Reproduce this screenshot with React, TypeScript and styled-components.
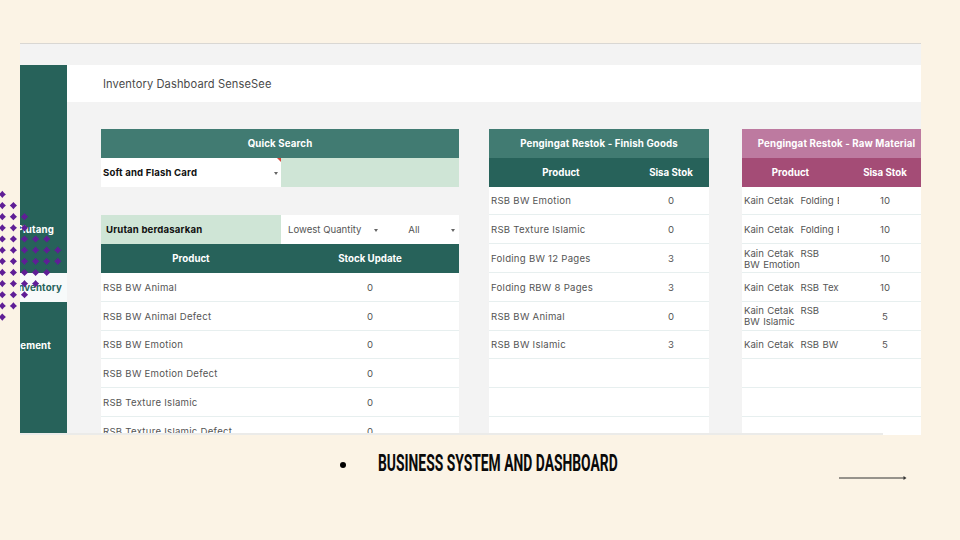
import React from 'react';
import styled, { createGlobalStyle } from 'styled-components';

const Global = createGlobalStyle`
  html, body { margin: 0; padding: 0; background: #fbf3e5; }
  body { width: 960px; height: 540px; overflow: hidden; font-family: "Inter", "Open Sans", sans-serif; }
`;
const Slide = styled.div`
  position: relative; width: 960px; height: 540px; padding: 43px 39px 0 20px; box-sizing: border-box;
  background: #fbf3e5; overflow: hidden;
`;
const Frame = styled.div`
  height: 392px; box-sizing: border-box; padding-top: 21px; background: #f3f3f3;
  border-top: 1px solid #d9d7d3; border-bottom: 2px solid #ebebe9; overflow: hidden; display: flex;
`;
const ScrollEnd = styled.span`
  position: absolute; left: 883px; top: 433px; width: 38px; height: 2px; background: #fff;
`;
const Sidebar = styled.nav`
  width: 47px; flex: none; height: 100%; background: #27625a; overflow: hidden; display: flex; flex-direction: column;
  padding-top: 150px; box-sizing: content-box;
`;
const NavItem = styled.div<{ $active?: boolean; $right: number; $h: number; $mt?: number }>`
  height: ${p => p.$h}px; flex: none; display: flex; align-items: center; justify-content: flex-end; white-space: nowrap;
  margin-top: ${p => p.$mt ?? 0}px;
  padding-right: ${p => p.$right}px; background: ${p => (p.$active ? '#f7fafa' : 'transparent')};
  color: ${p => (p.$active ? '#27625a' : '#ffffff')}; font-size: 9.7px; font-weight: 700; letter-spacing: .15px;
`;
const Main = styled.main`flex: 1; min-width: 0; display: flex; flex-direction: column; overflow: hidden;`;
const Header = styled.header`
  height: 37px; flex: none; background: #fff; display: flex; align-items: center; padding-left: 36px;
  font-size: 11.1px; color: #4a4a4a; letter-spacing: .12px;
`;
const Content = styled.div`display: flex; padding: 27px 0 0 34px; align-items: flex-start; overflow: hidden; flex: 1;`;
const Panel = styled.section<{ $w: number; $mr: number }>`
  width: ${p => p.$w}px; flex: none; margin-right: ${p => p.$mr}px;
`;
const Row = styled.div<{ $cols: string }>`display: grid; grid-template-columns: ${p => p.$cols}; height: 28.8px;`;
const Title = styled.div<{ $bg: string }>`
  height: 28.8px; display: flex; align-items: center; justify-content: center; background: ${p => p.$bg};
  color: #fff; font-size: 9.7px; font-weight: 700; white-space: nowrap; letter-spacing: .14px;
`;
const HeadCell = styled.div<{ $bg: string }>`
  background: ${p => p.$bg}; color: #fff; font-size: 9.7px; font-weight: 700;
  display: flex; align-items: center; justify-content: center;
`;
const Cell = styled.div<{ $center?: boolean; $tight?: boolean }>`
  background: #fff; border-bottom: 1px solid #e7efef; box-sizing: border-box; overflow: hidden; padding-top: 1px;
  display: flex; align-items: center; justify-content: ${p => (p.$center ? 'center' : 'flex-start')};
  padding-left: ${p => (p.$center ? 0 : 2)}px; color: #555; font-size: 9.6px; line-height: 11px;
  letter-spacing: ${p => (p.$center || p.$tight ? 0 : 0.26)}px; word-spacing: ${p => (p.$tight ? 0.7 : 0)}px; white-space: pre;
`;
const InputCell = styled.div<{ $bg: string; $bold?: boolean; $pad: number; $padRight?: number; $center?: boolean }>`
  position: relative; background: ${p => p.$bg}; display: flex; align-items: center; padding-left: ${p => p.$pad}px;
  padding-right: ${p => p.$padRight ?? 0}px;
  justify-content: ${p => (p.$center ? 'center' : 'flex-start')};
  font-size: 9.6px; font-weight: ${p => (p.$bold ? 700 : 400)}; color: ${p => (p.$bold ? '#111' : '#555')};
  letter-spacing: ${p => (p.$bold ? 0.16 : 0)}px;
`;
const Caret = styled.span<{ $r: number }>`
  position: absolute; right: ${p => p.$r}px; top: 14px; width: 0; height: 0;
  border-left: 2.5px solid transparent; border-right: 2.5px solid transparent; border-top: 3px solid #666;
`;
const Note = styled.span`
  position: absolute; right: 0; top: 0; width: 0; height: 0;
  border-left: 4px solid transparent; border-top: 4px solid #d8453a;
`;
const Spacer = styled.div`height: 28.8px;`;
const Caption = styled.div`display: flex; align-items: flex-start; height: 60px;`;
const Bullet = styled.span`width: 6px; height: 6px; border-radius: 50%; background: #000; margin: 27px 0 0 320px; flex: none;`;
const CaptionText = styled.h2`
  margin: 16px 0 0 32px; flex: none; width: 239px; white-space: nowrap; font-family: "Roboto", "Liberation Sans", sans-serif;
  font-size: 23.5px; line-height: 25px; font-weight: 700; color: #0a0a0a; text-transform: uppercase;
  transform: scaleX(.59); transform-origin: left center;
`;
const ArrowWrap = styled.svg`margin: 40px 0 0 222px; flex: none; display: block;`;
const DotsSvg = styled.svg`position: absolute; left: 0; top: 190px; pointer-events: none;`;

const leftRows: [string, string][] = [
  ['RSB BW Animal', '0'], ['RSB BW Animal Defect', '0'], ['RSB BW Emotion', '0'], ['RSB BW Emotion Defect', '0'],
  ['RSB Texture Islamic', '0'], ['RSB Texture Islamic Defect', '0'],
];
const finish: [string, string][] = [
  ['RSB BW Emotion', '0'], ['RSB Texture Islamic', '0'], ['Folding BW 12 Pages', '3'], ['Folding RBW 8 Pages', '3'],
  ['RSB BW Animal', '0'], ['RSB BW Islamic', '3'], ['', ''], ['', ''], ['', ''],
];
const raw: [string, string][] = [
  ['Kain Cetak  Folding BW', '10'], ['Kain Cetak  Folding RBW', '10'], ['Kain Cetak  RSB\nBW Emotion', '10'],
  ['Kain Cetak  RSB Texture', '10'], ['Kain Cetak  RSB\nBW Islamic', '5'], ['Kain Cetak  RSB BW', '5'],
  ['', ''], ['', ''], ['', ''],
];
const dotCounts = [1, 2, 3, 3, 5, 6, 6, 5, 4, 3, 2, 1];
const Dots = () => (
  <DotsSvg width="64" height="132" viewBox="0 0 64 132">
    {dotCounts.map((n, r) =>
      Array.from({ length: n }, (_, c) => {
        const x = 2.3 + c * 11.1;
        const y = 4.4 + r * 11.15;
        const a = 3.6;
        const b = 1.7;
        return <path key={`${r}-${c}`} d={`M${x} ${y - a}L${x + b} ${y - b}L${x + a} ${y}L${x + b} ${y + b}L${x} ${y + a}L${x - b} ${y + b}L${x - a} ${y}L${x - b} ${y - b}Z`} fill="#5f1e96" />;
      })
    )}
  </DotsSvg>
);

export default function App() {
  return (
    <Slide>
      <Global />
      <Frame>
        <Sidebar>
          <NavItem $right={13} $h={29}>Hutang Piutang</NavItem>
          <NavItem $right={5} $h={29} $mt={29} $active>Inventory</NavItem>
          <NavItem $right={16} $h={86}>Management</NavItem>
        </Sidebar>
        <Main>
          <Header>Inventory Dashboard SenseSee</Header>
          <Content>
            <Panel $w={358} $mr={30}>
              <Title $bg="#417b72">Quick Search</Title>
              <Row $cols="180px 178px">
                <InputCell $bg="#fff" $bold $pad={2}>Soft and Flash Card<Caret $r={3} /><Note /></InputCell>
                <InputCell $bg="#cfe5d6" $pad={0} />
              </Row>
              <Spacer />
              <Row $cols="180px 104px 74px">
                <InputCell $bg="#cfe5d6" $bold $pad={5}>Urutan berdasarkan</InputCell>
                <InputCell $bg="#fff" $pad={7}>Lowest Quantity<Caret $r={7} /></InputCell>
                <InputCell $bg="#fff" $pad={0} $padRight={16} $center>All<Caret $r={4} /></InputCell>
              </Row>
              <Row $cols="180px 178px">
                <HeadCell $bg="#27625a">Product</HeadCell>
                <HeadCell $bg="#27625a">Stock Update</HeadCell>
              </Row>
              {leftRows.map(([a, b]) => (
                <Row key={a} $cols="180px 178px">
                  <Cell>{a}</Cell>
                  <Cell $center>{b}</Cell>
                </Row>
              ))}
            </Panel>
            <Panel $w={220} $mr={33}>
              <Title $bg="#417b72">Pengingat Restok - Finish Goods</Title>
              <Row $cols="144px 76px">
                <HeadCell $bg="#27625a">Product</HeadCell>
                <HeadCell $bg="#27625a">Sisa Stok</HeadCell>
              </Row>
              {finish.map(([a, b], i) => (
                <Row key={i} $cols="144px 76px">
                  <Cell>{a}</Cell>
                  <Cell $center>{b}</Cell>
                </Row>
              ))}
            </Panel>
            <Panel $w={189} $mr={0}>
              <Title $bg="#bd7aa0">Pengingat Restok - Raw Material</Title>
              <Row $cols="97px 92px">
                <HeadCell $bg="#a44c76">Product</HeadCell>
                <HeadCell $bg="#a44c76">Sisa Stok</HeadCell>
              </Row>
              {raw.map(([a, b], i) => (
                <Row key={i} $cols="97px 92px">
                  <Cell $tight>{a}</Cell>
                  <Cell $center>{b}</Cell>
                </Row>
              ))}
            </Panel>
          </Content>
        </Main>
      </Frame>
      <ScrollEnd />
      <Caption>
        <Bullet />
        <CaptionText>Business System and Dashboard</CaptionText>
        <ArrowWrap width="68" height="6" viewBox="0 0 68 6">
          <path d="M0 3H65" stroke="#333" strokeWidth="1" />
          <path d="M64.5 1L67.5 3L64.5 5Z" fill="#333" />
        </ArrowWrap>
      </Caption>
      <Dots />
    </Slide>
  );
}
